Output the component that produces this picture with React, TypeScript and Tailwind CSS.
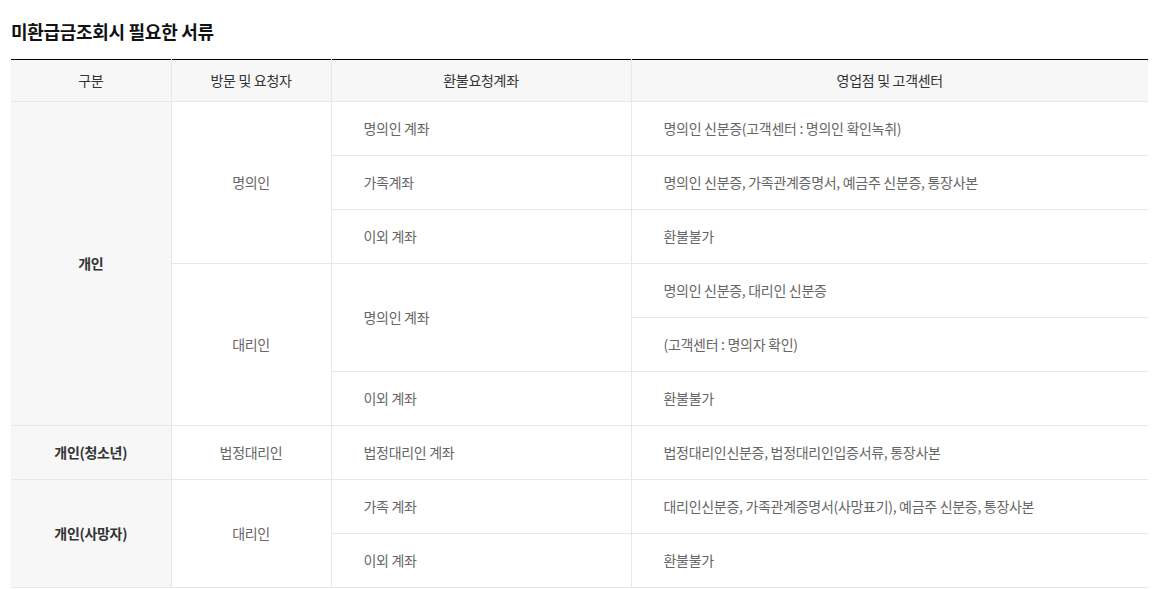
import React from 'react';

const font = { fontFamily: '"Noto Sans CJK KR", "Noto Sans", sans-serif' };

const th = 'h-[42px] border-l border-[#e8e8e8] first:border-l-0 bg-[#f7f7f7] text-[14px] tracking-[-0.3px] font-normal text-[#333]';
const td = 'h-[54px] border-b border-l border-[#e8e8e8] text-[14px] tracking-[-0.3px] text-[#666]';
const tdLeft = `${td} pl-8 text-left`;
const tdCenter = `${td} text-center`;
const tdHead = 'border-b border-[#e8e8e8] bg-[#f7f7f7] text-center text-[14px] tracking-[-0.3px] font-bold text-[#333]';

export default function App() {
  return (
    <div className="w-[1176px] h-[589px] bg-white pl-[11px] pr-[28px] pt-[19px]" style={font}>
      <h2 className="text-[18px] tracking-[-0.3px] font-bold leading-6 text-[#111] mb-4">미환급금조회시 필요한 서류</h2>
      <table className="w-full table-fixed border-collapse border-t border-black">
        <colgroup>
          <col className="w-[160px]" />
          <col className="w-[160px]" />
          <col className="w-[300px]" />
          <col />
        </colgroup>
        <thead>
          <tr className="border-b border-[#e8e8e8]">
            <th className={th}>구분</th>
            <th className={th}>방문 및 요청자</th>
            <th className={th}>환불요청계좌</th>
            <th className={th}>영업점 및 고객센터</th>
          </tr>
        </thead>
        <tbody>
          <tr>
            <td rowSpan={6} className={tdHead}>개인</td>
            <td rowSpan={3} className={tdCenter}>명의인</td>
            <td className={tdLeft}>명의인 계좌</td>
            <td className={tdLeft}>명의인 신분증(고객센터 : 명의인 확인녹취)</td>
          </tr>
          <tr>
            <td className={tdLeft}>가족계좌</td>
            <td className={tdLeft}>명의인 신분증, 가족관계증명서, 예금주 신분증, 통장사본</td>
          </tr>
          <tr>
            <td className={tdLeft}>이외 계좌</td>
            <td className={tdLeft}>환불불가</td>
          </tr>
          <tr>
            <td rowSpan={3} className={tdCenter}>대리인</td>
            <td rowSpan={2} className={tdLeft}>명의인 계좌</td>
            <td className={tdLeft}>명의인 신분증, 대리인 신분증</td>
          </tr>
          <tr>
            <td className={tdLeft}>(고객센터 : 명의자 확인)</td>
          </tr>
          <tr>
            <td className={tdLeft}>이외 계좌</td>
            <td className={tdLeft}>환불불가</td>
          </tr>
          <tr>
            <td className={tdHead}>개인(청소년)</td>
            <td className={tdCenter}>법정대리인</td>
            <td className={tdLeft}>법정대리인 계좌</td>
            <td className={tdLeft}>법정대리인신분증, 법정대리인입증서류, 통장사본</td>
          </tr>
          <tr>
            <td rowSpan={2} className={tdHead}>개인(사망자)</td>
            <td rowSpan={2} className={tdCenter}>대리인</td>
            <td className={tdLeft}>가족 계좌</td>
            <td className={tdLeft}>대리인신분증, 가족관계증명서(사망표기), 예금주 신분증, 통장사본</td>
          </tr>
          <tr>
            <td className={tdLeft}>이외 계좌</td>
            <td className={tdLeft}>환불불가</td>
          </tr>
        </tbody>
      </table>
    </div>
  );
}
